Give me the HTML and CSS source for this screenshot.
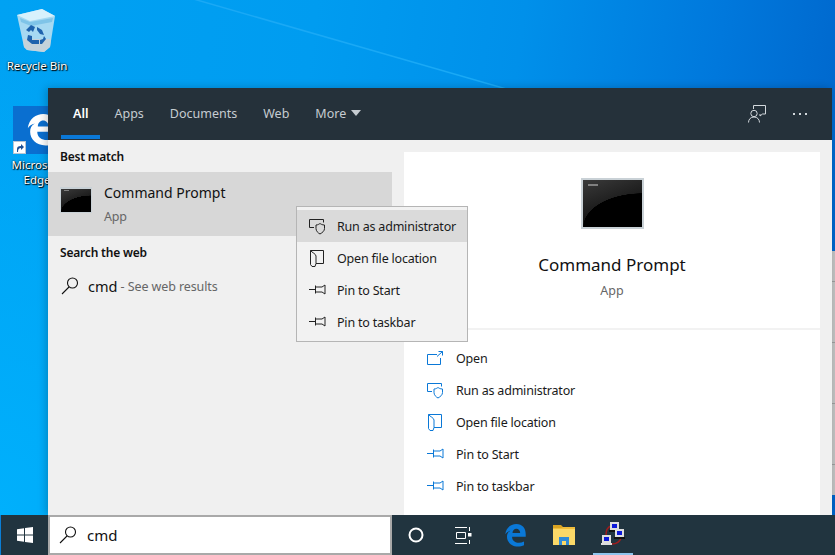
FILE: index.html
```html
<!DOCTYPE html>
<html lang="en">
<head>
    <meta charset="UTF-8">
    <meta name="viewport" content="width=device-width, initial-scale=1.0">
    <title>Windows Search</title>
    <link rel="stylesheet" href="styles.css">
</head>
<body>
    <div class="desktop">
        <svg class="rays" viewBox="0 0 835 515" preserveAspectRatio="none">
            <path d="M190 -2L510 90" stroke="#1aa9f5" stroke-width="1.500" fill="none"/>
        </svg>

        <div class="desk-icon recycle">
            <svg width="40" height="44" viewBox="0 0 40 44">
                <polygon points="0,6 25,0 38,7 33,38 27,43 10,41 7,38" fill="#a6d9f2"/>
                <polygon points="0,6 25,0 38,7 13,12" fill="#d8f1fc"/>
                <polygon points="3,9 13,13 36,9 35,13 14,17 4,13" fill="#7fc4e8"/>
                <polygon points="6,30 34,30 33,38 27,43 10,41 7,38" fill="#c5d2da"/>
                <path d="M9 21l5-5 4 2-2 5-2-2-2 2zM20 18l5 3 2 5-4-1-3-4zM11 26l4 1 0 4 7 0 0 4-7 0-5-4zM27 27l2 3-4 5-2 0 0-4 3-1z" fill="#1f63ad"/>
            </svg>
            <span>Recycle Bin</span>
        </div>

        <div class="desk-icon edge">
            <div class="edge-tile">
                <svg width="30" height="32" viewBox="0 0 24 27">
                    <path fill-rule="evenodd" d="M0 12C1 4 7 0 13 0C20 0 24 5 24 12V15H8C8 20 12 22 16 22C18 22 20 21.500 22 20.500V25C20 26 17 26.500 15 26.500C7 26.500 2 21 2 15C2 12 3 9.500 6 8C3 8.500 1.500 10 0 12ZM8.500 10.500H17.500C17.500 7.500 15.500 5.500 13 5.500C10.500 5.500 8.500 7.500 8.500 10.500Z" fill="#fff"/>
                </svg>
                <div class="shortcut">
                    <svg width="10" height="10" viewBox="0 0 10 10"><path d="M2 9V6c0-2 1-3 4-3V1l3 3-3 3V5C4 5 3 6 3 9z" fill="#1c4f96"/></svg>
                </div>
            </div>
            <span>Microsoft Edge</span>
        </div>

        <div class="back-window">
            <i></i><i></i><i></i><i></i>
        </div>

        <div class="search-panel">
            <div class="panel-header">
                <nav class="tabs">
                    <div class="tab active">All</div>
                    <div class="tab">Apps</div>
                    <div class="tab">Documents</div>
                    <div class="tab">Web</div>
                    <div class="tab">More <i class="caret"></i></div>
                </nav>
                <div class="header-actions">
                    <svg width="18" height="18" viewBox="0 0 18 18" fill="none" stroke="#d3d8dc">
                        <path d="M5.500 4V.5h12v8.500h-3l-2.500 2V9"/>
                        <circle cx="6" cy="8.500" r="3.200"/>
                        <path d="M.5 17.500c0-3 2-5.500 5.500-5.500s5.500 2.500 5.500 5.500"/>
                    </svg>
                    <div class="dots"><i></i><i></i><i></i></div>
                </div>
            </div>

            <div class="panel-body">
                <div class="results">
                    <h3>Best match</h3>
                    <div class="result-row selected">
                        <div class="cmd-icon small"></div>
                        <div class="result-text">
                            <div class="result-title">Command Prompt</div>
                            <div class="result-sub">App</div>
                        </div>
                    </div>
                    <h3>Search the web</h3>
                    <div class="web-row">
                        <svg width="20" height="20" viewBox="0 0 20 20" fill="none" stroke="#111" stroke-width="1.100">
                            <circle cx="12.500" cy="7" r="5"/>
                            <path d="M9 11L2 18"/>
                        </svg>
                        <span class="web-term">cmd</span><span class="web-hint"> - See web results</span>
                    </div>
                </div>

                <div class="detail">
                    <div class="detail-top">
                        <div class="cmd-icon large"></div>
                        <div class="detail-title">Command Prompt</div>
                        <div class="detail-sub">App</div>
                    </div>
                    <div class="detail-line"></div>
                    <ul class="actions">
                        <li>
                            <svg width="17" height="15" viewBox="0 0 17 15"><path d="M10 3.500H.5v10h13V7M10 5.500l5.500-5M11.500.5h4v4"/></svg>
                            Open
                        </li>
                        <li>
                            <svg width="17" height="17" viewBox="0 0 17 17"><path d="M5 9.500H.5v-8h14v3M7 7c2 0 3-1 4-1.500C12 6 13 7 15.500 7v3.500c0 2.500-2 4-4.500 5.500C9 15 7 13 7 10.500z"/></svg>
                            Run as administrator
                        </li>
                        <li>
                            <svg width="17" height="17" viewBox="0 0 17 17"><path d="M1.500.5H14.500V13.500H7M1.500.5V14.500L3 16.500H6L7 13.500V6C7 4 3 2.500 1.500.5"/></svg>
                            Open file location
                        </li>
                        <li>
                            <svg width="17" height="12" viewBox="0 0 17 12"><path d="M0 5.500h6M6.500 1.500v8M6.500 3h6.500l3-2v9l-3-2H6.500"/></svg>
                            Pin to Start
                        </li>
                        <li>
                            <svg width="17" height="12" viewBox="0 0 17 12"><path d="M0 5.500h6M6.500 1.500v8M6.500 3h6.500l3-2v9l-3-2H6.500"/></svg>
                            Pin to taskbar
                        </li>
                    </ul>
                </div>
            </div>

            <ul class="context-menu">
                <li class="hover">
                    <svg width="17" height="17" viewBox="0 0 17 17"><path d="M5 9.500H.5v-8h14v3M7 7c2 0 3-1 4-1.500C12 6 13 7 15.500 7v3.500c0 2.500-2 4-4.500 5.500C9 15 7 13 7 10.500z"/></svg>
                    Run as administrator
                </li>
                <li>
                    <svg width="17" height="17" viewBox="0 0 17 17"><path d="M1.500.5H14.500V13.500H7M1.500.5V14.500L3 16.500H6L7 13.500V6C7 4 3 2.500 1.500.5"/></svg>
                    Open file location
                </li>
                <li>
                    <svg width="17" height="12" viewBox="0 0 17 12"><path d="M0 5.500h6M6.500 1.500v8M6.500 3h6.500l3-2v9l-3-2H6.500"/></svg>
                    Pin to Start
                </li>
                <li>
                    <svg width="17" height="12" viewBox="0 0 17 12"><path d="M0 5.500h6M6.500 1.500v8M6.500 3h6.500l3-2v9l-3-2H6.500"/></svg>
                    Pin to taskbar
                </li>
            </ul>
        </div>
    </div>

    <div class="taskbar">
        <div class="start-btn">
            <svg width="16" height="16" viewBox="0 0 16 16" fill="#fff">
                <polygon points="0,2.300 7,1.300 7,7.500 0,7.500"/>
                <polygon points="8,1.100 16,0 16,7.500 8,7.500"/>
                <polygon points="0,8.500 7,8.500 7,14.700 0,13.700"/>
                <polygon points="8,8.500 16,8.500 16,16 8,14.900"/>
            </svg>
        </div>
        <div class="search-box">
            <svg width="20" height="20" viewBox="0 0 20 20" fill="none" stroke="#111" stroke-width="1.100">
                <circle cx="12.500" cy="7" r="5"/>
                <path d="M9 11L2 18"/>
            </svg>
            <span>cmd</span>
        </div>
        <div class="task-icons">
            <div class="task-btn">
                <svg width="16" height="16" viewBox="0 0 16 16" fill="none" stroke="#fff" stroke-width="2"><circle cx="8" cy="8" r="6.500"/></svg>
            </div>
            <div class="task-btn">
                <svg width="18" height="17" viewBox="0 0 18 17" fill="none" stroke="#fff">
                    <path d="M0 .5h12M0 16.500h12M1.500 5.500h9v6h-9zM14.500 0v4M14.500 13v4"/>
                    <rect x="13" y="6" width="3.500" height="3.500" fill="#fff" stroke="none"/>
                </svg>
            </div>
            <div class="task-btn edge-btn">
                <svg width="21" height="23" viewBox="0 0 24 27">
                    <path fill-rule="evenodd" d="M0 12C1 4 7 0 13 0C20 0 24 5 24 12V15H8C8 20 12 22 16 22C18 22 20 21.500 22 20.500V25C20 26 17 26.500 15 26.500C7 26.500 2 21 2 15C2 12 3 9.500 6 8C3 8.500 1.500 10 0 12ZM8.500 10.500H17.500C17.500 7.500 15.500 5.500 13 5.500C10.500 5.500 8.500 7.500 8.500 10.500Z" fill="#0a78d7"/>
                </svg>
            </div>
            <div class="task-btn folder-btn">
                <svg width="22" height="20" viewBox="0 0 22 20">
                    <path d="M0 0h8l2 2v2H0z" fill="#d9a322"/>
                    <path d="M0 3h22v17H0z" fill="#fbd868"/>
                    <path d="M0 3h8l2-1h12v2H0z" fill="#f0bd3a"/>
                    <path d="M6 20v-8h10v8h-3v-4h-4v4z" fill="#2f8ad8"/>
                </svg>
            </div>
            <div class="task-btn open">
                <svg width="24" height="24" viewBox="0 0 24 24">
                    <path d="M5 13C5 8 7 5 10 4M20 16c-1 3-4 6-9 6" fill="none" stroke="#a01c1c" stroke-width="1.500"/>
                    <rect x="9" y="0" width="9" height="8" fill="#ddd"/><rect x="11" y="2" width="5" height="4" fill="#0c18d8"/><rect x="8" y="8" width="11" height="2" fill="#111"/>
                    <rect x="14" y="7" width="9" height="8" fill="#ddd"/><rect x="16" y="9" width="5" height="4" fill="#0c18d8"/><rect x="13" y="15" width="11" height="2" fill="#111"/>
                    <rect x="1" y="13" width="9" height="8" fill="#ddd"/><rect x="3" y="15" width="5" height="4" fill="#0c18d8"/><rect x="0" y="21" width="11" height="2" fill="#ddd"/>
                </svg>
            </div>
        </div>
    </div>
</body>
</html>
```

FILE: styles.css
```css
* {
    box-sizing: border-box;
    margin: 0;
    padding: 0;
}

html, body {
    height: 100%;
    overflow: hidden;
}

body {
    display: flex;
    flex-direction: column;
    font-family: "Noto Sans", "Open Sans", sans-serif;
    font-size: 12.500px;
    letter-spacing: -0.2px;
    color: #1a1a1a;
    background: #0a7ed6;
}

.desktop {
    position: relative;
    flex: 1;
    background:
        radial-gradient(ellipse 320px 480px at 0 100%, #00b0fc, transparent),
        linear-gradient(98deg, #00a2f3 0%, #009cf0 35%, #0090ea 58%, #0078dc 80%, #0062c8 100%);
    overflow: hidden;
}

.rays {
    position: absolute;
    inset: 0;
    width: 100%;
    height: 100%;
}

.desk-icon {
    position: absolute;
    width: 74px;
    display: flex;
    flex-direction: column;
    align-items: center;
    color: #fff;
    font-size: 11.500px;
    letter-spacing: 0;
    line-height: 15px;
    text-align: center;
    text-shadow: 0 0 2px #000, 1px 1px 1px #000;
}

.recycle {
    left: 0;
    top: 9px;
}

.recycle svg {
    margin-left: -1px;
}

.recycle span {
    margin-top: 5px;
}

.edge {
    left: 0;
    top: 106px;
}

.edge-tile {
    position: relative;
    width: 48px;
    height: 48px;
    background: #0a6fd0;
    padding: 8px 0 0 9px;
}

.shortcut {
    position: absolute;
    left: 0;
    bottom: 0;
    width: 13px;
    height: 13px;
    background: #fff;
    border: 1px solid #b9c6d2;
    display: grid;
    place-items: center;
}

.edge span {
    margin-top: 3px;
}

/* window behind the panel, only its edge shows */
.back-window {
    position: absolute;
    right: 0;
    top: 251px;
    width: 3px;
    height: 244px;
    background: #c2c2c2;
    display: flex;
    flex-direction: column;
    justify-content: space-around;
}

.back-window i {
    height: 1px;
    background: #9c9c9c;
}

.search-panel {
    position: absolute;
    left: 48px;
    top: 88px;
    width: 784px;
    height: 427px;
    display: flex;
    flex-direction: column;
    box-shadow: -2px 0 8px rgba(0, 0, 0, 0.22);
}

.panel-header {
    height: 52px;
    background: #25313a;
    display: flex;
    justify-content: space-between;
    align-items: stretch;
    flex-shrink: 0;
}

.tabs {
    display: flex;
    gap: 2px;
    padding-left: 13px;
}

.tab {
    padding: 0 12px;
    line-height: 51px;
    color: #c6ccd1;
    letter-spacing: 0;
    border-bottom: 4px solid transparent;
    height: 51px;
}

.tab.active {
    color: #fff;
    font-weight: 600;
    border-bottom-color: #0a78d7;
}

.caret {
    display: inline-block;
    width: 0;
    height: 0;
    margin-left: 2px;
    vertical-align: 2px;
    border-left: 5.500px solid transparent;
    border-right: 5.500px solid transparent;
    border-top: 6px solid #c6ccd1;
}

.header-actions {
    display: flex;
    align-items: center;
    gap: 27px;
    padding-right: 25px;
}

.dots {
    display: flex;
    gap: 4px;
}

.dots i {
    width: 2px;
    height: 2px;
    background: #d3d8dc;
}

.panel-body {
    flex: 1;
    display: flex;
    background: #f0f0f0;
    min-height: 0;
}

.results {
    width: 344px;
}

.results h3 {
    font-size: 12px;
    font-weight: 600;
    color: #111;
    padding-left: 12px;
    line-height: 17px;
}

.results h3:first-child {
    margin-top: 8px;
    margin-bottom: 7px;
}

.result-row {
    height: 64px;
    display: flex;
    align-items: center;
    padding-left: 12px;
    gap: 12px;
}

.result-row.selected {
    background: #d7d7d7;
    margin-bottom: 8px;
}

.result-text {
    padding-top: 1px;
}

.result-title {
    font-size: 14px;
    line-height: 20px;
    letter-spacing: 0;
    color: #111;
}

.result-sub {
    color: #666;
    margin-top: 5px;
    line-height: 18px;
}

.cmd-icon {
    position: relative;
    flex-shrink: 0;
    border: 1px solid #c9d1d6;
    border-top-width: 2px;
    background:
        radial-gradient(ellipse 100% 72% at 100% 100%, #000 99%, transparent 100%),
        linear-gradient(160deg, #3a3a3a, #101010 70%);
}

.cmd-icon::before {
    content: "";
    position: absolute;
    left: 10%;
    top: 8%;
    width: 16%;
    height: 5%;
    background: #808080;
}

.cmd-icon.small {
    width: 32px;
    height: 26px;
    margin-bottom: 9px;
}

.cmd-icon.large {
    width: 63px;
    height: 51px;
    border-width: 2px;
}

.web-row {
    display: flex;
    align-items: center;
    padding: 14px 0 0 12px;
    height: 36px;
    white-space: pre;
}

.web-term {
    margin-left: 8px;
    font-size: 14.500px;
    letter-spacing: 0;
    color: #111;
}

.web-hint {
    letter-spacing: -0.1px;
    color: #666;
}

.detail {
    width: 416px;
    height: 363px;
    margin: 12px 0 0 12px;
    background: #fff;
    display: flex;
    flex-direction: column;
}

.detail-top {
    display: flex;
    flex-direction: column;
    align-items: center;
    padding-top: 26px;
}

.detail-title {
    margin-top: 24px;
    font-size: 17px;
    letter-spacing: 0;
    line-height: 24px;
    color: #111;
}

.detail-sub {
    margin-top: 5px;
    line-height: 18px;
    letter-spacing: 0;
    color: #666;
}

.detail-line {
    margin-top: 28px;
    height: 2px;
    background: #f2f2f2;
}

.actions {
    list-style: none;
    padding-top: 12px;
}

.actions li {
    height: 32px;
    display: flex;
    align-items: center;
    gap: 12px;
    padding-left: 23px;
}

.actions svg {
    fill: none;
    stroke: #0a78d7;
    flex-shrink: 0;
}

.context-menu {
    position: absolute;
    left: 248px;
    top: 118px;
    width: 172px;
    padding: 3px 0;
    list-style: none;
    background: #f2f2f2;
    border: 1px solid #b5b5b5;
}

.context-menu li {
    height: 32px;
    display: flex;
    align-items: center;
    gap: 11px;
    padding-left: 12px;
}

.context-menu li.hover {
    background: #dadada;
}

.context-menu svg {
    fill: none;
    stroke: #222;
    flex-shrink: 0;
}

.taskbar {
    height: 40px;
    flex-shrink: 0;
    display: flex;
    background: #21343f;
    margin-left: 1px;
}

.start-btn {
    width: 47px;
    display: grid;
    place-items: center;
}

.search-box {
    width: 344px;
    background: #fff;
    border: 2px solid #a9a9a9;
    display: flex;
    align-items: center;
    padding-left: 8px;
    gap: 9px;
    font-size: 15px;
    letter-spacing: 0;
    color: #111;
}

.task-icons {
    display: flex;
}

.task-btn {
    position: relative;
    width: 48px;
    display: grid;
    place-items: center;
}

.edge-btn {
    margin-left: 3px;
}

.folder-btn {
    margin-left: 1px;
}

.task-btn.open {
    width: 40px;
    margin-left: 5px;
    border-bottom: 2px solid #8fc5ee;
}
```
